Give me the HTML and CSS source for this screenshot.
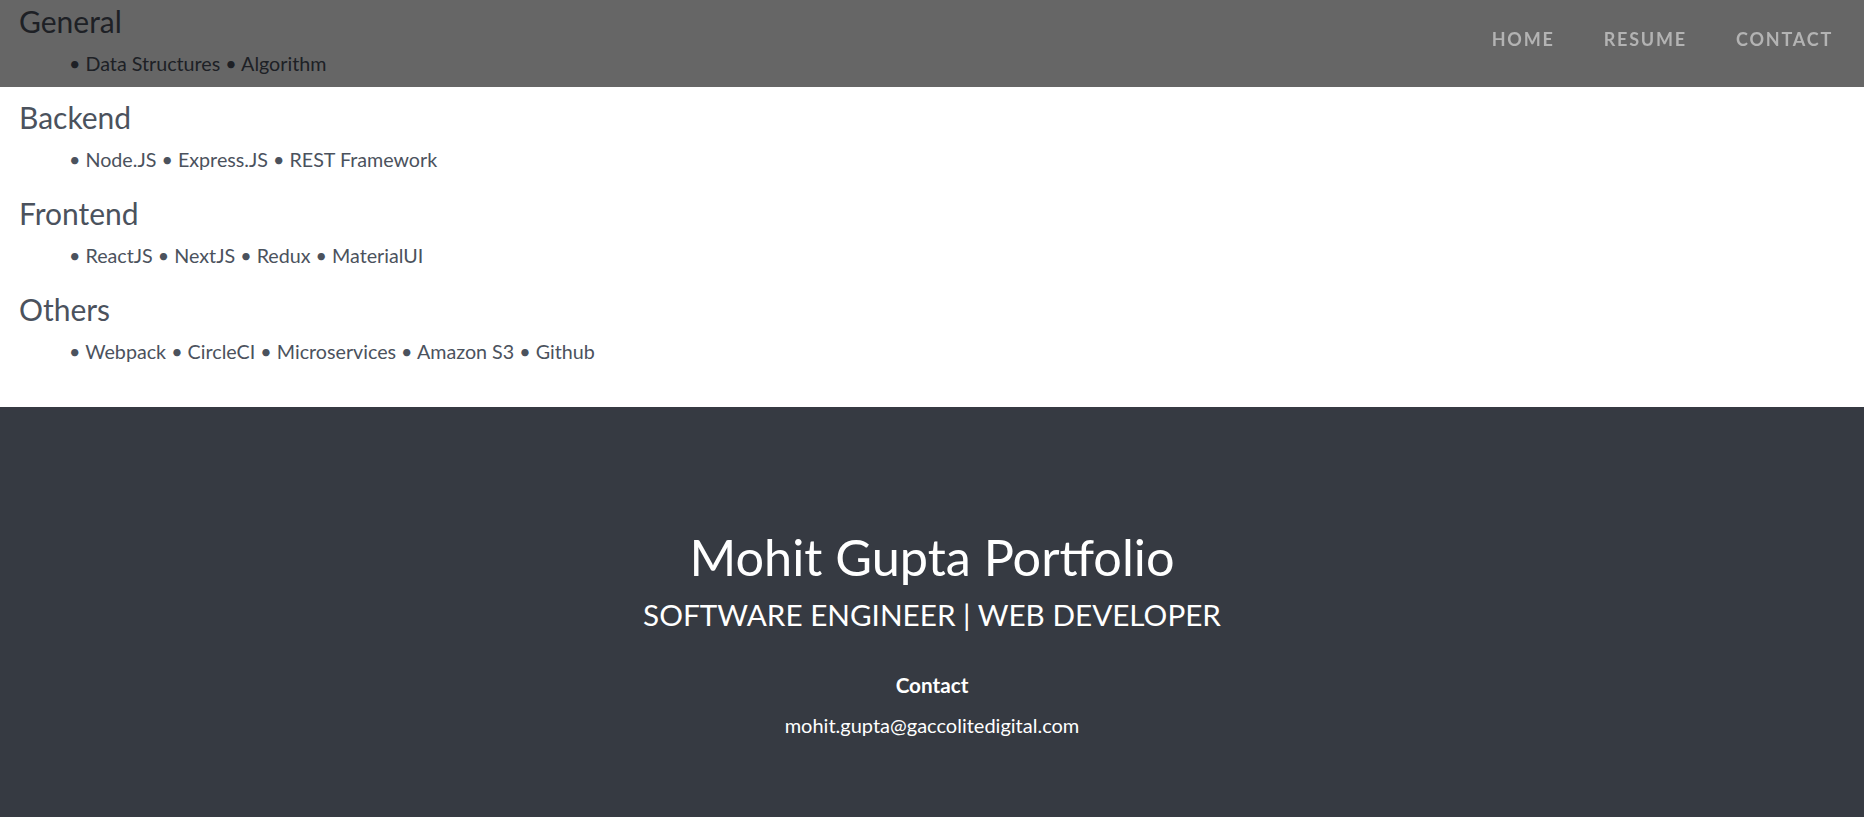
FILE: index.html
```html
<!DOCTYPE html>
<html lang="en">
<head>
<meta charset="utf-8">
<title>Mohit Gupta Portfolio</title>
<link rel="stylesheet" href="styles.css">
</head>
<body>
<nav class="topnav">
  <a class="nav-link" href="#">Home</a>
  <a class="nav-link" href="#">Resume</a>
  <a class="nav-link" href="#">Contact</a>
</nav>
<main class="skills">
  <section class="skill-group">
    <h3 class="skill-title">General</h3>
    <p class="skill-list">• Data Structures • Algorithm</p>
  </section>
  <section class="skill-group">
    <h3 class="skill-title">Backend</h3>
    <p class="skill-list">• Node.JS • Express.JS • REST Framework</p>
  </section>
  <section class="skill-group">
    <h3 class="skill-title">Frontend</h3>
    <p class="skill-list">• ReactJS • NextJS • Redux • MaterialUI</p>
  </section>
  <section class="skill-group">
    <h3 class="skill-title">Others</h3>
    <p class="skill-list">• Webpack • CircleCI • Microservices • Amazon S3 • Github</p>
  </section>
</main>
<footer class="footer">
  <h1 class="footer-title">Mohit Gupta Portfolio</h1>
  <h2 class="footer-sub">SOFTWARE ENGINEER | WEB DEVELOPER</h2>
  <h4 class="footer-contact">Contact</h4>
  <p class="footer-email">mohit.gupta@gaccolitedigital.com</p>
</footer>
</body>
</html>
```
FILE: styles.css
```css
* { box-sizing: border-box; }
html, body { margin: 0; padding: 0; }
body {
  font-family: Lato, "Open Sans", "Liberation Sans", sans-serif;
  color: #4b525d;
  min-height: 100vh;
  background: #363a42;
}
.topnav {
  position: fixed;
  top: 0;
  left: 0;
  right: 0;
  height: 87px;
  background: rgba(0, 0, 0, 0.6);
  display: flex;
  justify-content: flex-end;
  align-items: flex-start;
  gap: 49px;
  padding: 28px 31px 0 0;
  z-index: 10;
}
.nav-link {
  color: #b3b3b3;
  text-decoration: none;
  text-transform: uppercase;
  font-weight: 700;
  font-size: 18px;
  letter-spacing: 1.8px;
  line-height: 22px;
}
.skills {
  background: #ffffff;
  padding: 3.4px 0 20px 19px;
}
.skill-title {
  margin: 0 0 10.6px;
  font-weight: 400;
  font-size: 30px;
  line-height: 1.2;
  color: #4b525d;
}
.skill-list {
  margin: 0 0 20.6px;
  padding-left: 50px;
  font-size: 19.7px;
  line-height: 28.8px;
  color: #4b525d;
}
.footer {
  background: #363a42;
  color: #ffffff;
  text-align: center;
  padding: 120px 0 80px;
}
.footer-title {
  margin: 0;
  font-weight: 400;
  font-size: 50.4px;
  line-height: 1.2;
}
.footer-sub {
  margin: 9px 0 0;
  font-weight: 400;
  font-size: 29.7px;
  line-height: 1.2;
}
.footer-contact {
  margin: 41px 0 0;
  font-weight: 700;
  font-size: 20.7px;
  line-height: 1.2;
}
.footer-email {
  margin: 12px 0 0;
  font-size: 20px;
  line-height: 1.5;
}
```
